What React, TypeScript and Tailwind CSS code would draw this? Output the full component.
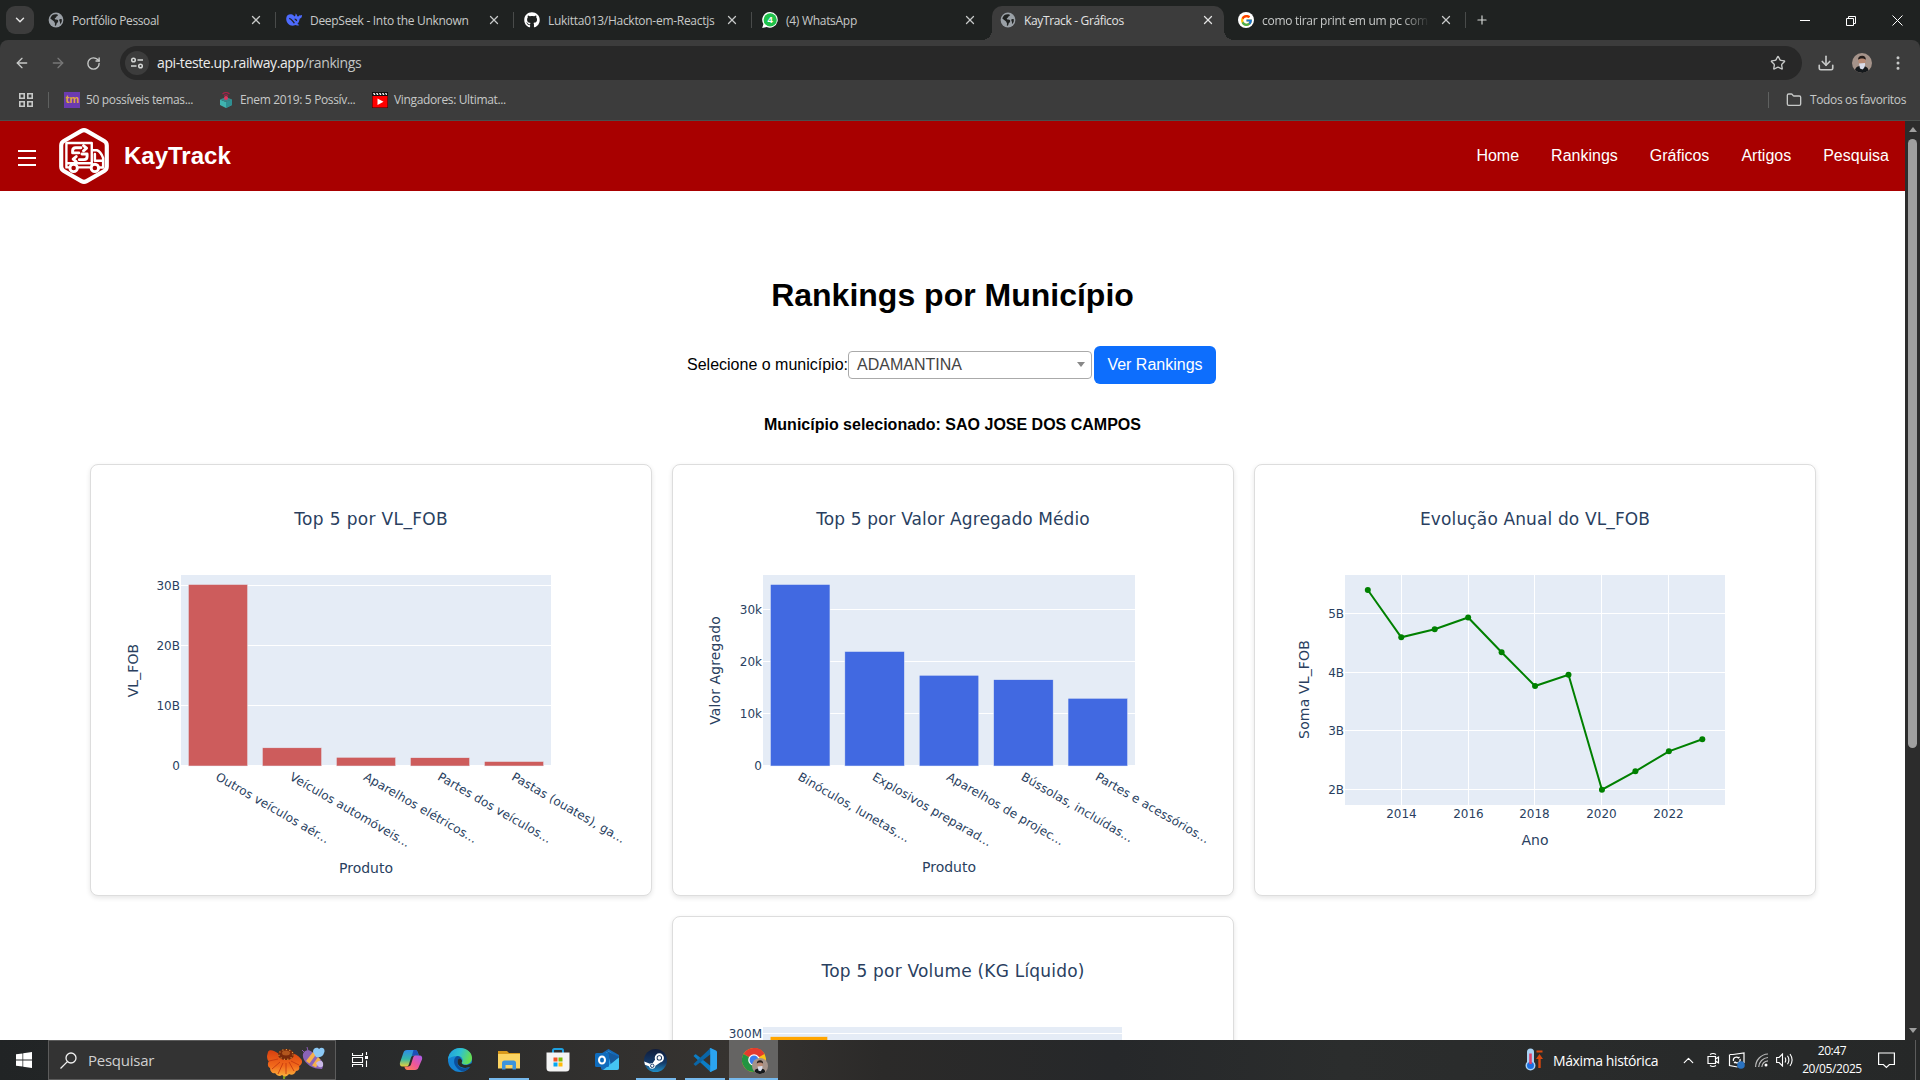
import React from "react";
import {
  ArrowLeft,
  ArrowRight,
  ChevronDown,
  ChevronUp,
  Download,
  EllipsisVertical,
  Folder,
  Plus,
  RotateCw,
  Star,
  X,
} from "lucide-react";
import { FaGithub } from "react-icons/fa";
import { FcGoogle } from "react-icons/fc";

/* ---------- Browser icons ---------- */

function GlobeIcon() {
  return (
    <svg className="size-4 shrink-0" viewBox="0 0 16 16">
      <circle cx="8" cy="8" r="7.4" fill="#9aa0a6" />
      <path
        d="M8.4 2.2c2 .2 1.8 1.6.6 2.1-1 .3-.6 1.4-1.6 1.6-1.3.2-.4 1.6.8 1.6 1.8 0 2 .7 2 1.8 0 1.400-1.600 1.300-1.800 3.100-.1.900-.900 1.500-1.600 1.200l.2-2c0-1-.9-1-.9-2L2.300 6.600A5.900 5.900 0 0 1 8.400 2.200zM13.900 7.200a6 6 0 0 1-1.600 4.900c-.7-.5 0-1.700-.5-2.500-.6-1-1-2.300.2-2.600z"
        fill="#202221"
      />
    </svg>
  );
}

function DeepSeekIcon() {
  return (
    <svg className="size-4 shrink-0" viewBox="0 0 16 16">
      <path
        d="M.2 7C0 3.600 2.600 2 5.200 2.300 6.800 2.500 7.500 3.600 8.700 4.400 9.300 3.400 9.800 2.900 9.500 1.400c1.200.6 1.600 1.700 1.700 2.900 1.500.3 2-.2 2.200-1 .9.2 1.500.2 2.600-.3.100 2.100-.8 3.500-2.300 3.700-.3 2.300-1.100 4-2.300 5.100.6.7 1.500.9 2 1.200-1.400.9-3 .6-4 .1C4.500 15.200.500 11.800.2 7z"
        fill="#4d6bfe"
      />
      <path d="M3.200 6.300c2.200.2 3.400 2.900 5.200 4.900M8.600 7.200c1.200 0 1.800.8 2 1.800" stroke="#202221" strokeWidth="1.300" fill="none" />
    </svg>
  );
}

function WhatsIcon() {
  return (
    <svg className="size-4 shrink-0" viewBox="0 0 16 16">
      <path d="M8.200 0a7.800 7.800 0 1 1-3.500 14.900L.2 16l1.200-4.100A7.800 7.800 0 0 1 8.200 0z" fill="#fff" />
      <circle cx="8.200" cy="7.900" r="6.600" fill="#1fc24b" />
      <text x="8.100" y="11.300" textAnchor="middle" fontFamily="Liberation Sans, sans-serif" fontWeight="700" fontSize="9.500" fill="#fff">4</text>
    </svg>
  );
}

function GoogleIcon() {
  return (
    <span className="flex size-4 shrink-0 items-center justify-center rounded-full bg-white">
      <FcGoogle size={13} />
    </span>
  );
}

function Avatar({ className }: { className: string }) {
  return (
    <svg className={className} viewBox="0 0 20 20">
      <circle cx="10" cy="10" r="10" fill="#a5938a" />
      <path d="M3 17c1-4 4-4 7-4s6 1 6.500 4.500A10 10 0 0 1 3 17z" fill="#15191c" />
      <ellipse cx="10" cy="8" rx="3.600" ry="4.200" fill="#b98a74" />
      <path d="M6 7c0-3 1.500-4.300 4.200-4.300S14 4.500 13.800 7c-1-2-6.500-2-7.800 0z" fill="#251d1b" />
      <path d="M7 10.500l6-.5c.5 2.500-.5 5-2.500 6.500L8 15.500z" fill="#d9dcea" />
    </svg>
  );
}

/* ---------- Browser chrome ---------- */

type TabProps = {
  icon: React.ReactNode;
  title: string;
  active?: boolean;
  separator?: boolean;
  tracking?: string;
  faded?: boolean;
};

function Tab({ icon, title, active, separator, tracking = "tracking-[-0.29px]", faded }: TabProps) {
  return (
    <div
      className={
        "relative flex h-[34px] w-[238px] shrink-0 items-center pb-[6px] " +
        (active ? "text-[#e3e3e3]" : "text-[#c7c9c8]")
      }
    >
      {active && (
        <>
          <div className="absolute -left-[8px] top-0 h-[34px] w-[232px] rounded-t-[10px] bg-[#3c3c3c]" />
          <div className="absolute -left-[18px] bottom-0 size-[10px] bg-[radial-gradient(circle_at_top_left,transparent_10px,#3c3c3c_10px)]" />
          <div className="absolute right-[4px] bottom-0 size-[10px] bg-[radial-gradient(circle_at_top_right,transparent_10px,#3c3c3c_10px)]" />
        </>
      )}
      <div className="relative flex flex-1 items-center">
        {icon}
        <span
          className={
            "ml-2 h-[18px] w-[168px] overflow-hidden text-[12px] leading-[19px] whitespace-nowrap " +
            tracking +
            (faded ? " [mask-image:linear-gradient(to_right,black_140px,transparent_168px)]" : "")
          }
        >
          {title}
        </span>
        <X className="ml-[9px] size-[14px] shrink-0" strokeWidth={2.200} />
        {separator && <div className="ml-[12px] h-4 w-px bg-[#494b4a]" />}
      </div>
    </div>
  );
}

function TabStrip() {
  return (
    <div className="flex h-10 items-end bg-[#1f2221]">
      <div className="mb-[6px] ml-[6px] mr-[14px] flex size-7 items-center justify-center rounded-[9px] bg-[#3c3c3c]">
        <ChevronDown className="size-[14px] text-[#e3e3e3]" strokeWidth={2.500} />
      </div>
      <Tab icon={<GlobeIcon />} title="Portfólio Pessoal" separator tracking="tracking-[-0.4px]" />
      <Tab icon={<DeepSeekIcon />} title="DeepSeek - Into the Unknown" separator />
      <Tab icon={<FaGithub className="size-4 shrink-0 text-white" />} title="Lukitta013/Hackton-em-Reactjs" separator />
      <Tab icon={<WhatsIcon />} title="(4) WhatsApp" />
      <Tab icon={<GlobeIcon />} title="KayTrack - Gráficos" active tracking="tracking-[-0.35px]" />
      <Tab icon={<GoogleIcon />} title="como tirar print em um pc com" separator faded />
      <Plus className="mb-[13px] -ml-px size-[14px] text-[#d5d7d6]" strokeWidth={2} />
      <div className="mb-[14px] ml-auto mr-[17px] flex items-center gap-[36px] text-white">
        <div className="h-px w-[10px] bg-white" />
        <svg className="size-[10px]" viewBox="0 0 10 10" fill="none" stroke="currentColor">
          <path d="M.5 2.500h7v7h-7zM2.500 2.500v-2h7v7h-2" />
        </svg>
        <svg className="size-[11px]" viewBox="0 0 11 11" fill="none" stroke="currentColor">
          <path d="M.5.5l10 10M10.500.5l-10 10" />
        </svg>
      </div>
    </div>
  );
}

function Toolbar() {
  return (
    <div className="flex h-[46px] items-center text-[#c7c9c8]">
      <ArrowLeft className="ml-[14px] size-4" />
      <ArrowRight className="ml-[20px] size-4 text-[#777]" />
      <RotateCw className="ml-[20px] size-[15px]" strokeWidth={2.200} />
      <div className="ml-[19px] flex h-[34px] w-[1682px] items-center rounded-full bg-[#282828] pl-[5px]">
        <div className="flex size-6 items-center justify-center rounded-full bg-[#3c3c3c]">
          <svg className="size-[14px]" viewBox="0 0 14 14" fill="none" stroke="#d5d7d6" strokeWidth="1.500">
            <circle cx="3.500" cy="4" r="1.800" />
            <path d="M7.500 4H13M1 10h5.500" />
            <circle cx="10.500" cy="10" r="1.800" />
          </svg>
        </div>
        <span className="ml-[8px] text-[14px] leading-5 tracking-[-0.39px] text-[#c3c5c4]">
          <span className="text-[#ececec]">api-teste.up.railway.app</span>/rankings
        </span>
        <Star className="ml-auto mr-[16px] size-4" />
      </div>
      <Download className="ml-[15px] size-[18px]" strokeWidth={2.200} />
      <Avatar className="ml-[17px] size-5" />
      <EllipsisVertical className="ml-[17px] size-[18px]" />
    </div>
  );
}

function BookmarkBar() {
  return (
    <div className="flex h-[35px] items-center border-b border-[#4a4f4d] pb-[7px] text-[12px] tracking-[-0.35px] text-[#c7c9c8]">
      <svg className="ml-[19px] size-[14px]" viewBox="0 0 14 14" fill="none" stroke="#c7c9c8" strokeWidth="1.600">
        <path d="M.8.8h4.400v4.400H.8zM8.800.8h4.400v4.400H8.800zM.8 8.800h4.400v4.400H.8zM8.800 8.800h4.400v4.400H8.800z" />
      </svg>
      <div className="ml-[15px] h-4 w-px bg-[#5f6160]" />
      <span className="ml-[15px] flex size-4 items-center justify-center bg-[#6b3bb0] text-[10px] font-bold text-[#e0a83c]">tm</span>
      <span className="ml-[6px] w-[130px]">50 possíveis temas...</span>
      <svg className="size-4 ml-[2px]" viewBox="0 0 16 16">
        <path d="M2 7.500l6 2.500 6-2.500v5.500L8 16l-6-3z" fill="#3fb4b0" />
        <path d="M8 10v6l6-3V7.500z" fill="#2f8f92" />
        <path d="M2 7.500L8 5l6 2.500L8 10z" fill="#38888c" />
        <circle cx="8" cy="6" r="2" fill="#e0355f" />
        <path d="M4.500 2c2-2 5-2 7 0M6 3.600c1.200-1 2.800-1 4 0" stroke="#a32348" fill="none" strokeWidth="1.200" />
      </svg>
      <span className="ml-[6px] w-[132px]">Enem 2019: 5 Possív...</span>
      <svg className="size-4" viewBox="0 0 16 16">
        <path d="M0 0h16v16H0z" fill="#111" />
        <path d="M.5 4h15v11.500H.5z" fill="#f00" />
        <path d="M1 1h1.500l1 2H2zM4 1h1.500l1 2H5zM7 1h1.500l1 2H8zM10 1h1.500l1 2H11zM13 1h1.500l.5 2h-1z" fill="#fff" />
        <path d="M5.500 6.500v6.500l6-3.200z" fill="#fff" />
      </svg>
      <span className="ml-[6px]">Vingadores: Ultimat...</span>
      <div className="ml-auto h-4 w-px bg-[#5f6160]" />
      <Folder className="ml-[17px] size-4" />
      <span className="ml-[8px] mr-[14px]">Todos os favoritos</span>
    </div>
  );
}

/* ---------- Page header ---------- */

function Logo() {
  return (
    <svg className="h-[58px] w-[52px]" viewBox="0 0 50 56" fill="none" stroke="#fff" strokeLinecap="round" strokeLinejoin="round">
      <path d="M22.500 3.700a5 5 0 0 1 5 0l17 9.800a5 5 0 0 1 2.500 4.300v20.400a5 5 0 0 1-2.500 4.300l-17 9.800a5 5 0 0 1-5 0l-17-9.800A5 5 0 0 1 3 38.200V17.800a5 5 0 0 1 2.500-4.300z" strokeWidth="4" />
      <path d="M8 15.500h24.500V37M8 15.500V39h3M19 39h12M9 35h22" strokeWidth="2.300" />
      <path d="M33 22.500h4.500q3.500 1 6 7.500v9H39M35.500 26v6.500h7" strokeWidth="2.400" />
      <circle cx="15" cy="39.500" r="3.600" fill="#a80000" strokeWidth="2.800" />
      <circle cx="35.500" cy="39.500" r="3.600" fill="#a80000" strokeWidth="2.800" />
      <path d="M22 20H17q-3 0-3 3v2h6M20.500 31.500H25q3 0 3-3V26h-5" strokeWidth="2.800" />
      <path d="M24.500 18l3 2.500-3 2.500M17.500 28.500l-3 2.500 3 2.500" strokeWidth="2.800" />
    </svg>
  );
}

const NAV = ["Home", "Rankings", "Gráficos", "Artigos", "Pesquisa"];

function SiteHeader() {
  return (
    <header className="flex h-[70px] shrink-0 items-center bg-[#a80000] text-white">
      <svg className="ml-[18px] mt-[3px] h-[18px] w-[18px]" viewBox="0 0 18 18" stroke="#fff" strokeWidth="2">
        <path d="M0 2h18M0 9h18M0 16h18" />
      </svg>
      <div className="ml-[22px]">
        <Logo />
      </div>
      <span className="ml-[14px] text-[24px] leading-7 font-bold">KayTrack</span>
      <nav className="mr-4 ml-auto flex gap-8 text-base leading-5">
        {NAV.map((item) => (
          <a key={item}>{item}</a>
        ))}
      </nav>
    </header>
  );
}

/* ---------- Charts ---------- */

type Tick = { y: number; label: string };

function YAxis({ ticks, left, width }: { ticks: Tick[]; left: number; width: number }) {
  return (
    <>
      {ticks.map((t) => (
        <g key={t.label}>
          <path d={`M${left} ${t.y}h${width}`} stroke="#fff" />
          <text x={left - 1} y={t.y + 4.200} textAnchor="end" fontSize="12">{t.label}</text>
        </g>
      ))}
    </>
  );
}

type BarChartProps = {
  title: string;
  titleWidth: number;
  yTitle?: string;
  xTitle?: string;
  width: number;
  ticks: Tick[];
  tops: number[];
  labels: string[];
  color: string;
  xTitleY: number;
};

const LEFT = 90;

function BarChart({ title, titleWidth, yTitle, xTitle, width, ticks, tops, labels, color, xTitleY }: BarChartProps) {
  const slot = width / 5;
  return (
    <svg className="block h-[430px] w-[560px] font-[DejaVu_Sans,Verdana,sans-serif]" viewBox="0 0 560 430" fill="#2a3f5f">
      <rect x={LEFT} y="110" width={width} height="190.500" fill="#e5ecf6" />
      <YAxis ticks={ticks} left={LEFT} width={width} />
      {tops.map((top, i) => (
        <rect
          key={i}
          x={LEFT + slot * (i + 0.100)}
          y={top}
          width={slot * 0.800}
          height={301 - top}
          fill={color}
          stroke="#e5ecf6"
          strokeWidth="0.500"
        />
      ))}
      {labels.map((label, i) => (
        <text
          key={label}
          fontSize="12"
          letterSpacing="0.100"
          transform={`translate(${LEFT + slot * (i + 0.500) - 3.200} 314.200) rotate(30)`}
        >
          {label}
        </text>
      ))}
      <text x="280" y="60" textAnchor="middle" fontSize="17" textLength={titleWidth}>{title}</text>
      {xTitle && (
        <text x={LEFT + width / 2} y={xTitleY} textAnchor="middle" fontSize="14">{xTitle}</text>
      )}
      {yTitle && (
        <text transform="translate(46.500 205.500) rotate(-90)" textAnchor="middle" fontSize="14" letterSpacing="0.100">{yTitle}</text>
      )}
    </svg>
  );
}

const YEARS = [
  { x: 146.500, label: "2014" },
  { x: 213.500, label: "2016" },
  { x: 279.500, label: "2018" },
  { x: 346.500, label: "2020" },
  { x: 413.500, label: "2022" },
];
const EVOLUTION = [125, 172.300, 164.300, 152.500, 187.300, 221, 209.700, 324.700, 306.300, 286.300, 274.300];

function LineChart() {
  const points = EVOLUTION.map((y, i) => ({ x: 112.800 + i * 33.450, y }));
  return (
    <svg className="block h-[430px] w-[560px] font-[DejaVu_Sans,Verdana,sans-serif]" viewBox="0 0 560 430" fill="#2a3f5f">
      <rect x={LEFT} y="110" width="380" height="230" fill="#e5ecf6" />
      {YEARS.map((t) => (
        <g key={t.label}>
          <path d={`M${t.x} 110v230`} stroke="#fff" />
          <text x={t.x} y="353" textAnchor="middle" fontSize="12">{t.label}</text>
        </g>
      ))}
      <YAxis
        left={LEFT}
        width={380}
        ticks={[
          { y: 148.500, label: "5B" },
          { y: 207.500, label: "4B" },
          { y: 265.500, label: "3B" },
          { y: 324.500, label: "2B" },
        ]}
      />
      <polyline points={points.map((p) => `${p.x},${p.y}`).join(" ")} fill="none" stroke="green" strokeWidth="2" />
      {points.map((p) => (
        <circle key={p.x} cx={p.x} cy={p.y} r="3" fill="green" />
      ))}
      <text x="280" y="60" textAnchor="middle" fontSize="17" textLength={230}>Evolução Anual do VL_FOB</text>
      <text x="280" y="380" textAnchor="middle" fontSize="14">Ano</text>
      <text transform="translate(54 224.500) rotate(-90)" textAnchor="middle" fontSize="14" letterSpacing="0.150">Soma VL_FOB</text>
    </svg>
  );
}

function Card({ children }: { children: React.ReactNode }) {
  return (
    <div className="h-[432px] w-[562px] shrink-0 overflow-hidden rounded-lg border border-[#ddd] bg-white shadow-[0_2px_5px_rgba(0,0,0,0.1)]">
      {children}
    </div>
  );
}

/* ---------- Page ---------- */

function Page() {
  return (
    <div className="flex flex-1 flex-col overflow-hidden bg-white font-['Liberation_Sans',Arial,sans-serif] text-black">
      <SiteHeader />
      <main className="flex flex-col items-center">
        <h1 className="mt-[86px] text-[32px] leading-[37px] font-bold">Rankings por Município</h1>
        <div className="mt-[32px] mr-[2px] flex h-[38px] items-center text-base">
          <span>Selecione o município:</span>
          <div className="mt-[-1px] flex h-7 w-[244px] items-center justify-between rounded border border-[#aaa] pr-[6px] pl-2 text-[#444]">
            <span>ADAMANTINA</span>
            <div className="border-x-4 border-t-[5px] border-x-transparent border-t-[#888]" />
          </div>
          <button className="ml-[2px] h-[38px] w-[122px] rounded-md bg-[#0d6efd] text-white">Ver Rankings</button>
        </div>
        <p className="mt-[32px] text-base leading-[18px] font-bold">Município selecionado: SAO JOSE DOS CAMPOS</p>
        <div className="mt-[30px] flex w-[1726px] flex-wrap justify-center gap-5">
          <Card>
            <BarChart
              title="Top 5 por VL_FOB"
              titleWidth={153.500}
              yTitle="VL_FOB"
              xTitle="Produto"
              width={370}
              color="#cd5c5c"
              xTitleY={407.500}
              ticks={[
                { y: 120.500, label: "30B" },
                { y: 180.500, label: "20B" },
                { y: 240.500, label: "10B" },
                { y: 300.500, label: "0" },
              ]}
              tops={[119.500, 282.800, 292.300, 292.700, 296.500]}
              labels={[
                "Outros veículos aér...",
                "Veículos automóveis...",
                "Aparelhos elétricos...",
                "Partes dos veículos...",
                "Pastas (ouates), ga...",
              ]}
            />
          </Card>
          <Card>
            <BarChart
              title="Top 5 por Valor Agregado Médio"
              titleWidth={273.500}
              yTitle="Valor Agregado"
              xTitle="Produto"
              width={372}
              color="#4169e1"
              xTitleY={406.500}
              ticks={[
                { y: 144.500, label: "30k" },
                { y: 196.500, label: "20k" },
                { y: 248.500, label: "10k" },
                { y: 300.500, label: "0" },
              ]}
              tops={[119.500, 186.500, 210.300, 214.700, 233.300]}
              labels={[
                "Binóculos, lunetas,...",
                "Explosivos preparad...",
                "Aparelhos de projec...",
                "Bússolas, incluídas...",
                "Partes e acessórios...",
              ]}
            />
          </Card>
          <Card>
            <LineChart />
          </Card>
          <Card>
            <BarChart
              title="Top 5 por Volume (KG Líquido)"
              titleWidth={263}
              width={359}
              color="#ffa500"
              xTitleY={406.500}
              ticks={[{ y: 116.500, label: "300M" }]}
              tops={[119.700]}
              labels={[]}
            />
          </Card>
        </div>
      </main>
    </div>
  );
}

function Scrollbar() {
  return (
    <div className="flex w-[15px] shrink-0 flex-col items-center bg-[#2c2c2c]">
      <div className="mt-[6px] border-x-4 border-b-[5px] border-x-transparent border-b-[#9f9f9f]" />
      <div className="mt-[7px] h-[609px] w-[9px] rounded-full bg-[#9f9f9f]" />
      <div className="mt-auto mb-[7px] border-x-4 border-t-[5px] border-x-transparent border-t-[#9f9f9f]" />
    </div>
  );
}

/* ---------- Taskbar ---------- */

function FlowerBee() {
  return (
    <svg className="h-[32px] w-[60px]" viewBox="0 0 60 32">
      <defs>
        <linearGradient id="petal" x1="0" y1="0" x2="0" y2="1">
          <stop offset="0" stopColor="#d8400f" />
          <stop offset="0.600" stopColor="#f2691b" />
          <stop offset="1" stopColor="#fbb03b" />
        </linearGradient>
      </defs>
      <path d="M17 25h3l-1 7h-2z" fill="#7a9a1f" />
      <path d="M13 7C8 3 3 2 2 5l-1 4c0 3 1 5 2 5-2 3-1 6 1 7 0 4 3 6 5 5 2 3 5 4 7 2 2 2 5 2 7-1 3 2 6 0 7-3 3 0 4-3 3-5 3-1 4-5 2-7-4-5-9-7-12-5z" fill="url(#petal)" />
      <path d="M14 15L6 22M17 16l-5 11M20 16v11M23 15l5 9M25 14l8 4M12 12L3 14" stroke="#c63a10" strokeWidth="0.900" />
      <ellipse cx="20" cy="7.500" rx="8" ry="5.500" fill="#7a2a0b" />
      <ellipse cx="20" cy="7.500" rx="7" ry="5" fill="none" stroke="#e8a33d" strokeWidth="1.200" strokeDasharray="1 2.500" />
      <ellipse cx="20" cy="6" rx="4" ry="2.500" fill="#b2561e" />
      <path d="M36 3l3 3M41 0l1 4" stroke="#8a5bb5" />
      <path d="M37 7c1-4 6-5 9-2l9 8c3 3 2 7 1 9-5 0-9-1-12-3-4-3-8-7-7-12z" fill="#8a63b8" />
      <path d="M40 14l7-9 3 2.500-6.500 9zM46 18.500l6-8.500 2.500 2.500-4.500 8z" fill="#f5b04c" />
      <path d="M47 5c0-5 5-5 6-3 3-3 7 0 5 4-1 4-5 5-8 4z" fill="#8cc9f5" />
      <path d="M50 16c4-4 8-2 7 3-2 2-5 2-7-3z" fill="#c9b9e6" />
    </svg>
  );
}

function CopilotIcon() {
  return (
    <svg className="size-6" viewBox="0 0 24 24">
      <defs>
        <linearGradient id="cpa" x1="0" y1="0" x2="0" y2="1">
          <stop offset="0" stopColor="#2f8be8" />
          <stop offset="0.550" stopColor="#35b8a8" />
          <stop offset="1" stopColor="#e8d03a" />
        </linearGradient>
        <linearGradient id="cpb" x1="1" y1="0" x2="0" y2="1">
          <stop offset="0" stopColor="#a45cf0" />
          <stop offset="0.500" stopColor="#f0569a" />
          <stop offset="1" stopColor="#ff8a4a" />
        </linearGradient>
      </defs>
      <path d="M8 2h8c2 0 2.500 1.500 3 3l.8 2.500H15c-2 0-2.700 1-3.200 2.700L10 16c-.5 2-1.500 2.500-3 2.500H3.500C1 18.500.5 16.500 1 14.500L4.500 4.500C5 3 6 2 8 2z" fill="url(#cpa)" />
      <path d="M14.500 2H16c2 0 2.500 1.500 3 3l.8 2.500H15c-1 0-1.800.3-2.300 1z" fill="#1b50b8" />
      <path d="M16 22H8.500c-2 0-2.600-1.500-3-3l-.2-.5H9c2 0 2.700-1 3.200-2.700L14 9.900c.5-1.900 1.500-2.400 3-2.400h3.500c2.500 0 3 2 2.500 4l-3.500 8c-.5 1.500-1.500 2.500-3.500 2.500z" fill="url(#cpb)" />
    </svg>
  );
}

function EdgeIcon() {
  return (
    <svg className="size-6" viewBox="0 0 24 24">
      <defs>
        <linearGradient id="edA" x1="0" y1="0" x2="1" y2="0.300">
          <stop offset="0" stopColor="#1f9be0" />
          <stop offset="0.550" stopColor="#2fc2cf" />
          <stop offset="1" stopColor="#64dd56" />
        </linearGradient>
      </defs>
      <circle cx="12" cy="12" r="12" fill="#1583d3" />
      <path d="M0 11C1 4.500 6 0 12 0c7 0 12 4.500 12 10 0 4-3 6.500-6.500 6.500-2.500 0-4-1-3.500-2 1.500-2 .7-6.500-4.500-6.500C5 8 1.500 9.500 0 11z" fill="url(#edA)" />
      <path d="M9.500 8C6 9 5 14 7.500 18c2 3.500 5.500 5.500 8.500 5.300 3-.8 5-2.700 6-4.300-7 3.500-14-.5-12.300-6.500C10.300 10.500 12 10 13 11c-.3-2-2-3-3.500-3z" fill="#0c4f9c" />
      <path d="M13 11c1.700 1.500 1 3 .5 4 1 2.500 6 3 10 0l.5 1.500-1.700 2.300c-7 3.200-14-.8-12.600-6.300C10.300 10.500 12 10 13 11z" fill="#282a29" />
    </svg>
  );
}

function ExplorerIcon() {
  return (
    <svg className="h-[20px] w-[22px]" viewBox="0 0 22 20">
      <path d="M0 1h9l2 2h11v5H0z" fill="#d99a1c" />
      <path d="M0 4h22v14.500H0z" fill="#fcd462" />
      <path d="M4 19.500V13q0-2.500 2.500-2.500h9Q18 10.500 18 13v6.500h-3.500V15h-7v4.500z" fill="#3d94dc" />
    </svg>
  );
}

function StoreIcon() {
  return (
    <svg className="h-[24px] w-[24px]" viewBox="0 0 24 24">
      <path d="M7 5V2.500Q7 1 8.500 1h7Q17 1 17 2.500V5" stroke="#1ea0e0" strokeWidth="2" fill="none" />
      <path d="M.5 4.500h23V20q0 3.500-3.500 3.500H4Q.5 23.500.5 20z" fill="#f4f4f4" />
      <path d="M7.500 9.500h4v4h-4z" fill="#f35325" />
      <path d="M12.500 9.500h4v4h-4z" fill="#81bc06" />
      <path d="M7.500 14.500h4v4h-4z" fill="#05a6f0" />
      <path d="M12.500 14.500h4v4h-4z" fill="#ffba08" />
    </svg>
  );
}

function OutlookIcon() {
  return (
    <svg className="size-6" viewBox="0 0 24 24">
      <path d="M4 7l9.500-6L24 7v13q0 2-2 2H8q-2 0-2-2z" fill="#1469b8" />
      <path d="M6 8.500L13.500 3 22 9v4l-7 5-9-3z" fill="#2aa0e8" />
      <path d="M12 3l12 6-8 8z" fill="#155a9e" />
      <path d="M24 9.500V20q0 2-2 2H8z" fill="#45c5f4" />
      <rect y="5" width="14" height="14" rx="1.500" fill="#0f6cbd" />
      <ellipse cx="7" cy="12" rx="3" ry="3.500" stroke="#fff" strokeWidth="2" fill="none" />
    </svg>
  );
}

function SteamIcon() {
  return (
    <svg className="size-[23px]" viewBox="0 0 24 24">
      <defs>
        <linearGradient id="steam" x1="0" y1="0" x2="0" y2="1">
          <stop offset="0" stopColor="#101c3a" />
          <stop offset="0.600" stopColor="#143a68" />
          <stop offset="1" stopColor="#1f8fc8" />
        </linearGradient>
      </defs>
      <circle cx="12" cy="12" r="12" fill="url(#steam)" />
      <path d="M.2 13l6 2.500q1.500-1 3-.8l3-4.500L17 14l-5 3.500q-.5 3-3.400 3.200-2.800 0-3.500-2.700L1 16.500z" fill="#fff" />
      <circle cx="16" cy="9.300" r="3.800" fill="#143058" stroke="#fff" strokeWidth="2" />
      <circle cx="16" cy="9.300" r="1.900" fill="#fff" />
      <circle cx="8.600" cy="17.500" r="1.800" fill="none" stroke="#143a68" />
    </svg>
  );
}

function CodeIcon() {
  return (
    <svg className="size-6" viewBox="0 0 24 24">
      <path d="M0.500 8L2 6.500q.6-.4 1.200 0L19 19v4.500L16.500 23z" fill="#0c7dc4" />
      <path d="M.5 16L2 17.500q.6.400 1.200 0L19 5V.5L16.500 1z" fill="#0a66a8" />
      <path d="M17 .3Q17.500 0 18 .2l5 2.300q1 .5 1 1.500v16q0 1-1 1.500l-5 2.300q-1 .3-1.600-.4.800.3.800-.9V1.500q0-1-.8-.8z" fill="#2ba4f0" />
    </svg>
  );
}

function ChromeIcon() {
  return (
    <div className="relative size-6">
      <svg className="size-6" viewBox="0 0 24 24">
        <circle cx="12" cy="12" r="12" fill="#fbc116" />
        <path d="M12 12L1.600 6A12 12 0 0 1 22.400 6z" fill="#e33b2e" />
        <path d="M12 0a12 12 0 0 1 10.400 6H12z" fill="#e33b2e" />
        <path d="M1.600 6A12 12 0 0 0 12 24l5.200-9L12 12z" fill="#229342" />
        <circle cx="12" cy="12" r="5.800" fill="#fff" />
        <circle cx="12" cy="12" r="4.500" fill="#3b7ded" />
      </svg>
      <Avatar className="absolute left-[10px] top-[10px] size-4" />
    </div>
  );
}

function TaskApp({ children, state }: { children: React.ReactNode; state?: "open" | "focused" }) {
  return (
    <div
      className={
        "relative flex h-10 w-[49px] shrink-0 items-center justify-center " +
        (state === "focused" ? "bg-[#656463]" : "")
      }
    >
      {children}
      {state === "open" && <div className="absolute bottom-0 h-[2px] w-10 bg-[#76b9ed]" />}
      {state === "focused" && <div className="absolute bottom-0 h-[2px] w-full bg-[#76b9ed]" />}
    </div>
  );
}

function Taskbar() {
  return (
    <div className="flex h-10 shrink-0 items-center bg-[linear-gradient(90deg,#212425_0%,#282a2b_18%,#363330_38%,#2b2a29_46%,#26282a_58%,#2b2d2d_70%,#262828_100%)] font-['Open_Sans','Noto_Sans',sans-serif] text-white">
      <svg className="ml-4 size-4" viewBox="0 0 16 16" fill="#fff">
        <path d="M0 2.300L6.500 1.400v6.200H0zM7.200 1.300L16 0v7.600H7.200zM0 8.400h6.500v6.200L0 13.700zM7.200 8.400H16V16l-8.800-1.300z" />
      </svg>
      <div className="ml-4 flex h-10 w-[288px] items-center border border-[#5c5c5c] bg-[#333]">
        <svg className="ml-[11px] size-[17px]" viewBox="0 0 17 17" fill="none" stroke="#f0f0f0" strokeWidth="1.300">
          <circle cx="11" cy="6" r="5" />
          <path d="M7.400 9.600L.5 16.500" />
        </svg>
        <span className="ml-[11px] text-[15px] tracking-[-0.25px] text-[#d0d0d0]">Pesquisar</span>
        <div className="mt-[5px] ml-auto mr-[9px]">
          <FlowerBee />
        </div>
      </div>
      <svg className="mr-[18px] ml-[16px] h-[16px] w-[16px]" viewBox="0 0 16 16" fill="none" stroke="#fff">
        <path d="M.5 1v2.500h10V1M.5 15v-2.500h10V15M.5 5.500h10v5H.5zM14.500 0v3M14.500 8.500V15" strokeWidth="1.100" />
        <path d="M13 4h3v3h-3z" fill="#fff" stroke="none" />
      </svg>
      <div className="flex">
        <TaskApp><CopilotIcon /></TaskApp>
        <TaskApp><EdgeIcon /></TaskApp>
        <TaskApp state="open"><ExplorerIcon /></TaskApp>
        <TaskApp><StoreIcon /></TaskApp>
        <TaskApp><OutlookIcon /></TaskApp>
        <TaskApp state="open"><SteamIcon /></TaskApp>
        <TaskApp state="open"><CodeIcon /></TaskApp>
        <TaskApp state="focused"><ChromeIcon /></TaskApp>
      </div>
      <svg className="ml-auto h-[24px] w-[18px]" viewBox="0 0 18 24">
        <path d="M2 4a3.500 3.500 0 0 1 7 0v10a5 5 0 1 1-7 0z" fill="#a9d3f5" />
        <circle cx="5.500" cy="17.500" r="3.500" fill="#1d6fe0" />
        <path d="M4.200 5.500h2.600V16H4.200z" fill="#e0406a" />
        <path d="M11.500 2.500h6v2h-6zM14.500 6l3.500 5h-2.300v9h-2.400v-9H11z" fill="#d9480f" />
      </svg>
      <span className="ml-[10px] w-[104px] text-[14px] tracking-[-0.4px] whitespace-nowrap">Máxima histórica</span>
      <ChevronUp className="ml-[23px] size-[17px]" strokeWidth={1.700} />
      <svg className="ml-[10px] h-4 w-[13px]" viewBox="0 0 13 16" fill="none" stroke="#fff" strokeWidth="1.200">
        <path d="M1 4.500h7.500v7H1zM8.500 7L11.500 5v6l-3-2M3 2.500Q6 .5 9 2.500M3 13.500q3 2 6 0" />
      </svg>
      <svg className="ml-[8px] h-[17px] w-[18px]" viewBox="0 0 18 17" fill="none" stroke="#fff" strokeWidth="1.200">
        <path d="M5 2.500L16 1v10M2 2.500h3M1.500 2.500v11l8 1.500M5.500 9a3 3 0 0 1 5-3l1-1M12 7a3 3 0 0 1-5 3l-1 1" />
        <circle cx="13" cy="13" r="3.800" fill="#2a72c0" stroke="none" />
      </svg>
      <svg className="ml-[9px] h-[14px] w-[13px]" viewBox="0 0 13 14" fill="none" stroke="#fff" strokeWidth="1.200">
        <path d="M.6 14A13 13 0 0 1 13 1M3.700 14A10 10 0 0 1 13 4.500M6.800 14A7 7 0 0 1 13 7.800" stroke="#b8b8b8" />
        <circle cx="11" cy="12" r="1.500" fill="#fff" stroke="none" />
      </svg>
      <svg className="ml-[8px] h-[14px] w-[18px]" viewBox="0 0 18 14" fill="none" stroke="#fff" strokeWidth="1.100">
        <path d="M.6 4.500h2.500L6.500 1v12L3.100 9.500H.6zM9 4.500q1.500 2.500 0 5M11.500 2.700q2.800 4.300 0 8.600M14 1q4.200 6 0 12" />
      </svg>
      <div className="ml-[8px] w-[60px] text-center text-[12px] leading-[18px] tracking-[-0.4px]">
        <div>20:47</div>
        <div>20/05/2025</div>
      </div>
      <svg className="ml-[16px] h-[17px] w-[17px]" viewBox="0 0 17 17" fill="none" stroke="#fff" strokeWidth="1.200">
        <path d="M.6 1h15.800v11.500h-5l-3 3-3-3H.6z" />
      </svg>
      <div className="ml-[20px] mr-[4px] h-10 w-px bg-[#5c5c5c]" />
    </div>
  );
}

export default function App() {
  return (
    <div className="flex h-[1080px] w-[1920px] flex-col overflow-hidden">
      <div className="shrink-0 bg-[#1f2221] font-['Open_Sans','Noto_Sans',sans-serif]">
        <TabStrip />
        <div className="rounded-t-[8px] bg-[#3c3c3c]">
          <Toolbar />
          <BookmarkBar />
        </div>
      </div>
      <div className="flex h-[919px] shrink-0">
        <Page />
        <Scrollbar />
      </div>
      <Taskbar />
    </div>
  );
}
